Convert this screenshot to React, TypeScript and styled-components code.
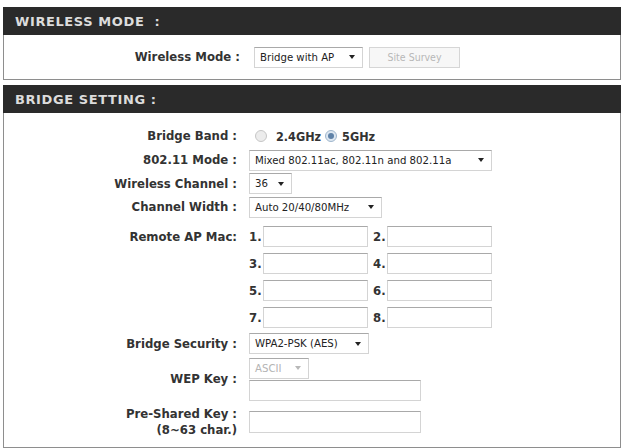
import React from "react";
import styled, { createGlobalStyle } from "styled-components";

const Global = createGlobalStyle`
  html, body { margin: 0; padding: 0; background: #ffffff; }
  body { font-family: "DejaVu Sans Condensed", "DejaVu Sans", Tahoma, sans-serif; color: #333; }
  * { box-sizing: border-box; }
`;

const Page = styled.div`
  width: 623px;
  height: 448px;
  padding: 7px 2px 0 3px;
  overflow: hidden;
`;

const Panel = styled.section<{ $mb?: number }>`
  border: 1px solid #8e8e8e;
  margin-bottom: ${(p) => p.$mb ?? 5}px;
  background: #fff;
`;

const Header = styled.div`
  height: 28px;
  margin: -1px -1px 0 -1px;
  background: #2a2a2a;
  color: #dcdcdc;
  font-family: "DejaVu Sans", Tahoma, sans-serif;
  font-weight: bold;
  font-size: 13px;
  letter-spacing: 0.6px;
  display: flex;
  align-items: center;
  padding-left: 12px;
  white-space: pre;
`;

const Body = styled.div<{ $h: number; $pt?: number; $center?: boolean }>`
  display: flex;
  flex-direction: column;
  height: ${(p) => p.$h}px;
  padding-top: ${(p) => p.$pt ?? 0}px;
  justify-content: ${(p) => (p.$center ? "center" : "flex-start")};
`;

const Row = styled.div<{ $h: number; $lw?: number; $gap?: number; $mt?: number }>`
  display: grid;
  grid-template-columns: ${(p) => p.$lw ?? 233}px 1fr;
  column-gap: ${(p) => p.$gap ?? 12}px;
  align-items: center;
  height: ${(p) => p.$h}px;
  margin-top: ${(p) => p.$mt ?? 0}px;
`;

const Label = styled.div`
  text-align: right;
  font-weight: bold;
  font-size: 13px;
  color: #333;
  line-height: 16px;
  white-space: nowrap;
`;

const Controls = styled.div<{ $gap?: number }>`
  display: flex;
  align-items: center;
  gap: ${(p) => p.$gap ?? 6}px;
`;

const Select = styled.div<{ $w: number; $disabled?: boolean }>`
  width: ${(p) => p.$w}px;
  height: 21px;
  border: 1px solid #d4d4d4;
  border-top-color: #a9a9a9;
  background: #fff;
  display: flex;
  align-items: center;
  justify-content: space-between;
  padding: 0 7px 0 5px;
  font-size: 11.3px;
  color: ${(p) => (p.$disabled ? "#b4b4b4" : "#222")};
  white-space: nowrap;
`;

const Caret = styled.span<{ $disabled?: boolean }>`
  width: 0;
  height: 0;
  border-left: 3.5px solid transparent;
  border-right: 3.5px solid transparent;
  border-top: 4px solid ${(p) => (p.$disabled ? "#b8b8b8" : "#222")};
  margin-left: 8px;
`;

const Button = styled.button`
  width: 91px;
  height: 21px;
  border: 1px solid #d6d6d6;
  background: #f7f7f7;
  color: #b8b8b8;
  font-family: inherit;
  font-size: 10.5px;
  padding: 0;
`;

const Radio = styled.span<{ $checked?: boolean; $ml?: number }>`
  width: 12px;
  height: 12px;
  margin-left: ${(p) => p.$ml ?? 0}px;
  border-radius: 50%;
  display: inline-flex;
  align-items: center;
  justify-content: center;
  border: 1px solid ${(p) => (p.$checked ? "#9fb6cc" : "#c6c6c6")};
  background: ${(p) => (p.$checked ? "#dde7f1" : "#ececec")};
  &::after {
    content: "";
    width: 6px;
    height: 6px;
    border-radius: 50%;
    background: ${(p) => (p.$checked ? "#5f82a8" : "transparent")};
  }
`;

const Option = styled.span<{ $ml?: number }>`
  font-weight: bold;
  font-size: 12.5px;
  color: #333;
  margin-left: ${(p) => p.$ml ?? 0}px;
`;

const Input = styled.input<{ $w: number; $h?: number }>`
  width: ${(p) => p.$w}px;
  height: ${(p) => p.$h ?? 21}px;
  border: 1px solid #d4d4d4;
  border-top-color: #a9a9a9;
  background: #fff;
  padding: 0 4px;
  font-family: inherit;
  font-size: 11px;
  margin: 0;
  outline: none;
`;

const MacPair = styled.div`
  display: flex;
  align-items: center;
`;

const MacNum = styled.span`
  width: 14px;
  font-weight: bold;
  font-size: 13px;
  color: #333;
`;

const Stack = styled.div<{ $gap?: number }>`
  display: flex;
  flex-direction: column;
  align-items: flex-start;
  gap: ${(p) => p.$gap ?? 1}px;
`;

const macRows: [string, string][] = [
  ["1.", "2."],
  ["3.", "4."],
  ["5.", "6."],
  ["7.", "8."],
];

export default function App() {
  return (
    <Page>
      <Global />
      <Panel>
        <Header>{"WIRELESS MODE  :"}</Header>
        <Body $h={44} $center>
          <Row $h={24} $lw={236} $gap={14}>
            <Label>Wireless Mode :</Label>
            <Controls $gap={6}>
              <Select $w={109}>
                Bridge with AP
                <Caret />
              </Select>
              <Button disabled>Site Survey</Button>
            </Controls>
          </Row>
        </Body>
      </Panel>
      <Panel $mb={0}>
        <Header>{"BRIDGE SETTING :"}</Header>
        <Body $h={334} $pt={11}>
          <Row $h={24}>
            <Label>Bridge Band :</Label>
            <Controls $gap={0}>
              <Radio $ml={6} />
              <Option $ml={9}>2.4GHz</Option>
              <Radio $checked $ml={4} />
              <Option $ml={5}>5GHz</Option>
            </Controls>
          </Row>
          <Row $h={24}>
            <Label>802.11 Mode :</Label>
            <Controls>
              <Select $w={243}>
                Mixed 802.11ac, 802.11n and 802.11a
                <Caret />
              </Select>
            </Controls>
          </Row>
          <Row $h={23}>
            <Label>Wireless Channel :</Label>
            <Controls>
              <Select $w={43}>
                36
                <Caret />
              </Select>
            </Controls>
          </Row>
          <Row $h={24}>
            <Label>Channel Width :</Label>
            <Controls>
              <Select $w={133}>
                Auto 20/40/80MHz
                <Caret />
              </Select>
            </Controls>
          </Row>
          {macRows.map(([a, b], i) => (
            <Row $h={27} key={a} $mt={i === 0 ? 4 : 0}>
              <Label>{i === 0 ? "Remote AP Mac:" : ""}</Label>
              <Controls $gap={5}>
                <MacPair>
                  <MacNum>{a}</MacNum>
                  <Input $w={105} />
                </MacPair>
                <MacPair>
                  <MacNum>{b}</MacNum>
                  <Input $w={105} />
                </MacPair>
              </Controls>
            </Row>
          ))}
          <Row $h={25}>
            <Label>Bridge Security :</Label>
            <Controls>
              <Select $w={120}>
                WPA2-PSK (AES)
                <Caret />
              </Select>
            </Controls>
          </Row>
          <Row $h={46}>
            <Label>WEP Key :</Label>
            <Stack $gap={1}>
              <Select $w={60} $disabled>
                ASCII
                <Caret $disabled />
              </Select>
              <Input $w={172} />
            </Stack>
          </Row>
          <Row $h={40}>
            <Label>
              Pre-Shared Key :
              <br />
              (8~63 char.)
            </Label>
            <Controls>
              <Input $w={172} $h={22} />
            </Controls>
          </Row>
        </Body>
      </Panel>
    </Page>
  );
}
